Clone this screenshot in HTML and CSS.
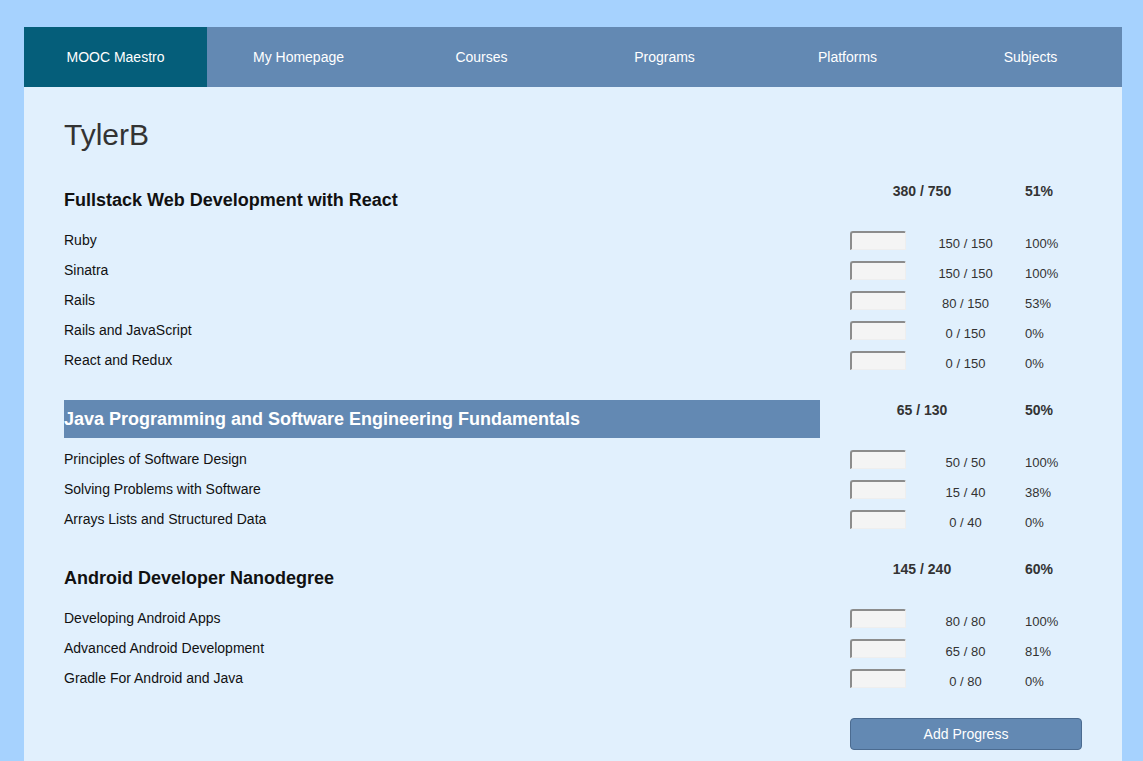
FILE: index.html
```html
<!DOCTYPE html>
<html>
<head>
<meta charset="utf-8">
<link rel="stylesheet" href="styles.css">
</head>
<body>
<div class="page">
  <nav class="nav">
    <a class="nav-item brand">MOOC Maestro</a>
    <a class="nav-item">My Homepage</a>
    <a class="nav-item">Courses</a>
    <a class="nav-item">Programs</a>
    <a class="nav-item">Platforms</a>
    <a class="nav-item">Subjects</a>
  </nav>
  <main class="content">
    <h1 class="user">TylerB</h1>

    <section class="program">
      <div class="head">
        <h2 class="title">Fullstack Web Development with React</h2>
        <div class="total">380 / 750</div>
        <div class="total-pct">51%</div>
      </div>
      <div class="row"><span class="name">Ruby</span><span class="box"></span><span class="amt">150 / 150</span><span class="pct">100%</span></div>
      <div class="row"><span class="name">Sinatra</span><span class="box"></span><span class="amt">150 / 150</span><span class="pct">100%</span></div>
      <div class="row"><span class="name">Rails</span><span class="box"></span><span class="amt">80 / 150</span><span class="pct">53%</span></div>
      <div class="row"><span class="name">Rails and JavaScript</span><span class="box"></span><span class="amt">0 / 150</span><span class="pct">0%</span></div>
      <div class="row"><span class="name">React and Redux</span><span class="box"></span><span class="amt">0 / 150</span><span class="pct">0%</span></div>
    </section>

    <section class="program">
      <div class="head">
        <h2 class="title active">Java Programming and Software Engineering Fundamentals</h2>
        <div class="total">65 / 130</div>
        <div class="total-pct">50%</div>
      </div>
      <div class="row"><span class="name">Principles of Software Design</span><span class="box"></span><span class="amt">50 / 50</span><span class="pct">100%</span></div>
      <div class="row"><span class="name">Solving Problems with Software</span><span class="box"></span><span class="amt">15 / 40</span><span class="pct">38%</span></div>
      <div class="row"><span class="name">Arrays Lists and Structured Data</span><span class="box"></span><span class="amt">0 / 40</span><span class="pct">0%</span></div>
    </section>

    <section class="program">
      <div class="head">
        <h2 class="title">Android Developer Nanodegree</h2>
        <div class="total">145 / 240</div>
        <div class="total-pct">60%</div>
      </div>
      <div class="row"><span class="name">Developing Android Apps</span><span class="box"></span><span class="amt">80 / 80</span><span class="pct">100%</span></div>
      <div class="row"><span class="name">Advanced Android Development</span><span class="box"></span><span class="amt">65 / 80</span><span class="pct">81%</span></div>
      <div class="row"><span class="name">Gradle For Android and Java</span><span class="box"></span><span class="amt">0 / 80</span><span class="pct">0%</span></div>
    </section>

    <div class="actions">
      <button class="add">Add Progress</button>
    </div>
  </main>
</div>
</body>
</html>
```
FILE: styles.css
```css
* { box-sizing: border-box; }
html, body { margin: 0; padding: 0; }
body {
  background: #a6d2fe;
  font-family: "Liberation Sans", Arial, sans-serif;
}
.page {
  margin: 27px 21px 0 24px;
}
.nav {
  display: grid;
  grid-template-columns: repeat(6, 1fr);
  height: 60px;
  background: #6389b3;
}
.nav-item {
  display: flex;
  align-items: center;
  justify-content: center;
  color: #fff;
  font-size: 14px;
}
.nav-item.brand { background: #055e7a; }
.content {
  background: #e1f0fd;
  padding: 20px 40px 40px;
  min-height: 700px;
}
.user {
  margin: 0 0 18px;
  font-size: 30px;
  font-weight: normal;
  line-height: 56px;
  color: #333;
}
.program {
  margin-bottom: 26px;
}
.head, .row {
  display: grid;
  grid-template-columns: 1fr 56px 119px 57px;
}
.head { height: 38px; margin-bottom: 5px; }
.title {
  margin: 0 30px 0 0;
  font-size: 18px;
  font-weight: bold;
  line-height: 38px;
  color: #111;
}
.title.active {
  background: #6389b3;
  color: #fff;
}
.total {
  grid-column: 2 / span 2;
  text-align: center;
  padding: 1px 31px 0 0;
  font-size: 14px;
  font-weight: bold;
  line-height: 18px;
  color: #333;
}
.total-pct {
  padding-top: 1px;
  font-size: 14px;
  font-weight: bold;
  line-height: 18px;
  color: #333;
}
.row { height: 30px; }
.name {
  padding-top: 7px;
  font-size: 14px;
  line-height: 18px;
  color: #111;
}
.box {
  margin-top: 7px;
  height: 19px;
  width: 56px;
  background: #f4f4f4;
  border-style: solid;
  border-width: 2px 1px 1px 2px;
  border-color: #8c8c8c #eeeeee #eeeeee #8c8c8c;
  border-radius: 3px 2px 0 0;
}
.amt {
  padding-top: 11px;
  text-align: center;
  font-size: 13px;
  line-height: 18px;
  color: #333;
}
.pct {
  padding-top: 11px;
  font-size: 13px;
  line-height: 18px;
  color: #333;
}
.actions {
  display: flex;
  justify-content: flex-end;
  margin-top: 1px;
}
.add {
  width: 232px;
  height: 32px;
  background: #6389b3;
  border: 1px solid #4b6b90;
  border-radius: 4px;
  color: #fff;
  font-family: "Liberation Sans", Arial, sans-serif;
  font-size: 14px;
}
```
